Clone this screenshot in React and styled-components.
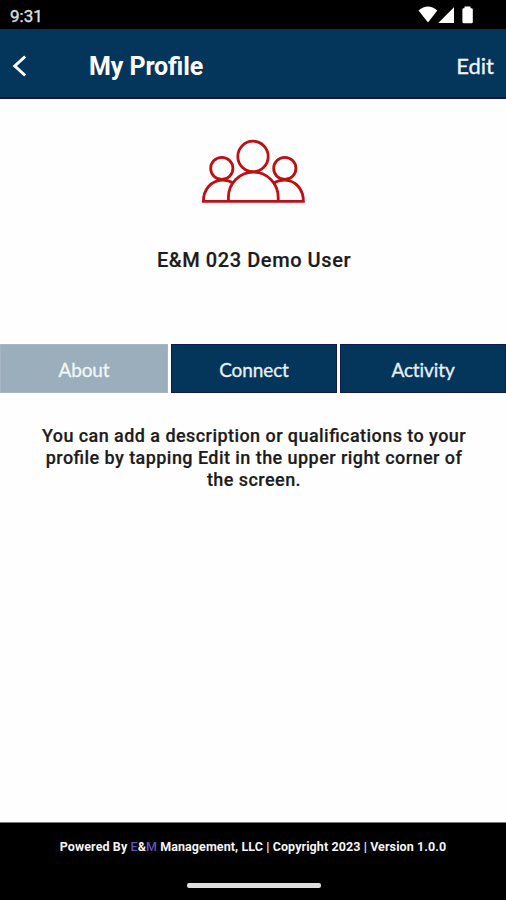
import React from "react";
import styled, { createGlobalStyle } from "styled-components";

const GlobalStyle = createGlobalStyle`
  * { box-sizing: border-box; }
  body { margin: 0; background: #fefefe; }
`;

const Screen = styled.div`
  display: flex;
  flex-direction: column;
  width: 506px;
  height: 900px;
  overflow: hidden;
  background: #fefefe;
  color: #1c1c1c;
  font-family: Roboto, sans-serif;
  font-feature-settings: "liga" 1;
`;

const StatusBar = styled.div`
  display: flex;
  justify-content: space-between;
  height: 29px;
  padding: 0 32px 0 10px;
  background: #000;
`;

const Clock = styled.span`
  font-size: 17px;
  line-height: 33px;
  color: #dedede;
  -webkit-text-stroke: 0.4px #dedede;
`;

const StatusIcons = styled.svg`
  display: block;
  fill: #fff;
`;

const Header = styled.header`
  display: flex;
  align-items: center;
  height: 70px;
  padding: 0 12px 0 12px;
  background: #04365b;
  border-bottom: 2px solid #0b1845;
  color: #fff;
`;

const BackButton = styled.button`
  display: flex;
  padding: 5px 0 0;
  border: 0;
  background: none;
`;

const Title = styled.h1`
  flex: 1;
  margin: 7px 0 0 61px;
  font-size: 25px;
  line-height: 30px;
  font-weight: 700;
  letter-spacing: -0.1px;
`;

const EditButton = styled.button`
  padding: 0;
  margin-top: 6px;
  border: 0;
  background: none;
  color: #f4f6fc;
  font: 400 22px/28px Lato, sans-serif;
  -webkit-text-stroke: 0.3px #f4f6fc;
`;

const Summary = styled.section`
  display: flex;
  flex-direction: column;
  align-items: center;
  height: 245px;
  padding-top: 39px;
`;

const GroupIcon = styled.svg`
  display: block;
  fill: none;
  stroke: #bd1013;
  stroke-width: 2.8;
`;

const UserName = styled.h2`
  margin: 41px 0 0 2px;
  font-size: 20px;
  line-height: 26px;
  font-weight: 500;
  letter-spacing: 0.58px;
  -webkit-text-stroke: 0.2px #1c1c1c;
`;

const Tabs = styled.nav`
  display: grid;
  grid-template-columns: 168px 166px 166px;
  column-gap: 3px;
  height: 49px;
`;

const Tab = styled.button`
  padding: 3px 0 0;
  border: 1px solid ${(p) => (p.$active ? "#a5b5c1" : "#101c4c")};
  background: ${(p) => (p.$active ? "#9aaebb" : "#04365b")};
  color: ${(p) => (p.$active ? "#f2f6f9" : "#e9f0f8")};
  font: 400 19px/26px Lato, sans-serif;
  letter-spacing: -0.1px;
  -webkit-text-stroke: 0.3px currentColor;
`;

const Description = styled.p`
  flex: 1;
  margin: 0;
  padding: 32px 0 0 2px;
  text-align: center;
  font-size: 18px;
  line-height: 22px;
  font-weight: 500;
  letter-spacing: 0.44px;
  -webkit-text-stroke: 0.2px #1c1c1c;
`;

const Footer = styled.footer`
  display: flex;
  flex-direction: column;
  align-items: center;
  height: 78px;
  border-top: 1px solid #777;
  background: #000;
`;

const Credits = styled.div`
  margin-top: 16px;
  white-space: nowrap;
  font-size: 12.5px;
  line-height: 16px;
  font-weight: 700;
  letter-spacing: 0.09px;
  color: #f5f5f5;
`;

const Brand = styled.span`
  color: #6054b8;
  font-weight: 500;
`;

const HomeBar = styled.div`
  width: 134px;
  height: 5px;
  margin: 28px 0 0 1px;
  border-radius: 2px;
  background: #dedede;
`;

export default function App() {
  return (
    <Screen>
      <GlobalStyle />
      <StatusBar>
        <Clock>9:31</Clock>
        <StatusIcons width="56" height="29" viewBox="418 0 56 29">
          <path d="M418.5 10.5Q428 2.5 437.3 10.5L428 22.5Z" />
          <path d="M454 7.2V23H438.3Z" />
          <path d="M464.5 6.5h6v1.8h1q1.3 0 1.3 1.3v12.4q0 1.3-1.3 1.3h-7.8q-1.3 0-1.3-1.3V9.6q0-1.3 1.3-1.3h.8z" />
        </StatusIcons>
      </StatusBar>
      <Header>
        <BackButton aria-label="Back">
          <svg width="16" height="24" viewBox="12 54 16 24" fill="none" stroke="#fff" strokeWidth="3">
            <path d="M25.2 56.5L14.8 66L25.2 75.5" />
          </svg>
        </BackButton>
        <Title>My Profile</Title>
        <EditButton>Edit</EditButton>
      </Header>
      <Summary>
        <GroupIcon width="106" height="68" viewBox="200 137.6 106 68">
          <circle cx="253" cy="156" r="15.2" />
          <circle cx="221.8" cy="168" r="11.1" />
          <circle cx="284.8" cy="168" r="11.1" />
          <path d="M228.4 201V197A24.9 25.3 0 0 1 278.2 197V201" />
          <path d="M233.5 182.5Q228 179.5 222 179.8C211 180.3 203.4 189 203.4 201H303.4C303.4 189 296 180.3 285 179.8Q279 179.5 273.5 182.5" />
        </GroupIcon>
        <UserName>E&amp;M 023 Demo User</UserName>
      </Summary>
      <Tabs>
        <Tab $active>About</Tab>
        <Tab>Connect</Tab>
        <Tab>Activity</Tab>
      </Tabs>
      <Description>
        You can add a description or qualifications to your
        <br />
        profile by tapping Edit in the upper right corner of
        <br />
        the screen.
      </Description>
      <Footer>
        <Credits>
          Powered By <Brand>E</Brand>&amp;<Brand>M</Brand> Management, LLC | Copyright 2023 | Version 1.0.0
        </Credits>
        <HomeBar />
      </Footer>
    </Screen>
  );
}
